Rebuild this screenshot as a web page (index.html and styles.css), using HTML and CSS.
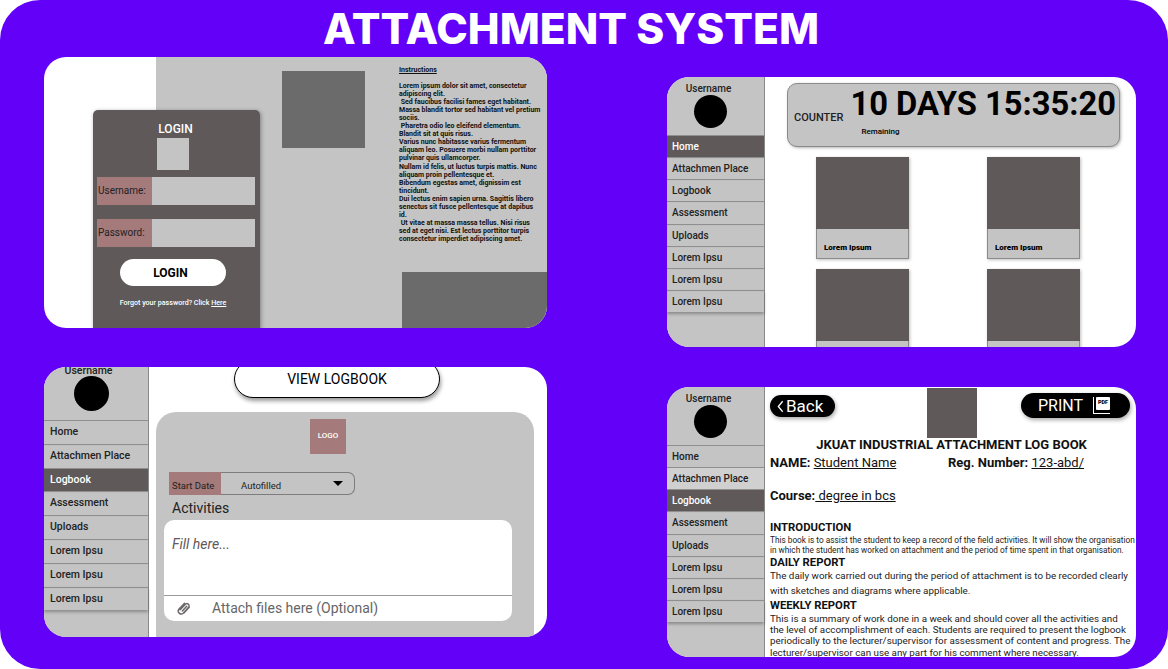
FILE: index.html
```html
<!DOCTYPE html>
<html lang="en">
<head>
  <meta charset="UTF-8">
  <title>Attachment System</title>
  <link rel="stylesheet" href="styles.css">
</head>
<body>
  <div class="stage">
    <h1 class="title">ATTACHMENT SYSTEM</h1>

    <div class="col col-left">
      <!-- login -->
      <section class="panel login-panel">
        <div class="login-blank"></div>
        <div class="login-gray">
          <div class="login-img"></div>
          <div class="instructions">
            <div class="instructions-head">Instructions</div>
            <p>Lorem ipsum dolor sit amet, consectetur adipiscing elit.<br>
            &nbsp;Sed faucibus facilisi fames eget habitant. Massa blandit tortor sed habitant vel pretium sociis.<br>
            &nbsp;Pharetra odio leo eleifend elementum. Blandit sit at quis risus.<br>
            Varius nunc habitasse varius fermentum aliquam leo. Posuere morbi nullam porttitor pulvinar quis ullamcorper.<br>
            Nullam id felis, ut luctus turpis mattis. Nunc aliquam proin pellentesque et.<br>
            Bibendum egestas amet, dignissim est tincidunt.<br>
            Dui lectus enim sapien urna. Sagittis libero senectus sit fusce pellentesque at dapibus id.<br>
            &nbsp;Ut vitae at massa massa tellus. Nisi risus sed at eget nisi. Est lectus porttitor turpis consectetur imperdiet adipiscing amet.</p>
          </div>
          <div class="login-corner"></div>
        </div>
        <div class="login-card">
          <div class="login-title">LOGIN</div>
          <div class="login-logo"></div>
          <div class="field"><span class="field-label">Username:</span><span class="field-input"></span></div>
          <div class="field"><span class="field-label">Password:</span><span class="field-input"></span></div>
          <button class="login-btn">LOGIN</button>
          <div class="forgot">Forgot your password? Click <u>Here</u></div>
        </div>
      </section>

      <!-- activity form -->
      <section class="panel app big">
        <aside class="side">
          <div class="side-head">
            <div class="side-name">Username</div>
            <div class="avatar"></div>
          </div>
          <a class="nav">Home</a>
          <a class="nav">Attachmen Place</a>
          <a class="nav active">Logbook</a>
          <a class="nav">Assessment</a>
          <a class="nav">Uploads</a>
          <a class="nav">Lorem Ipsu</a>
          <a class="nav">Lorem Ipsu</a>
          <a class="nav">Lorem Ipsu</a>
        </aside>
        <div class="form-main">
          <button class="view-btn">VIEW LOGBOOK</button>
          <div class="form-card">
            <div class="form-logo">LOGO</div>
            <div class="date-row">
              <span class="date-label">Start Date</span>
              <span class="date-value">Autofilled</span>
              <span class="caret"></span>
            </div>
            <div class="activities">Activities</div>
            <div class="fill-box">
              <div class="fill-text">Fill here...</div>
              <div class="attach">
                <svg class="clip" viewBox="0 0 24 24" width="15" height="15"><path d="M5 14l8-8.500a3.500 3.500 0 0 1 5.500 4.500L10 19.500a4.800 4.800 0 0 1-7-6.500l9-9.500M8.500 16l7-7.500M11 19l8.500-9" fill="none" stroke="#6e6a6a" stroke-width="2.400" stroke-linecap="round"/></svg>
                <span>Attach files here (Optional)</span>
              </div>
            </div>
          </div>
        </div>
      </section>
    </div>

    <div class="col col-right">
      <!-- dashboard -->
      <section class="panel app">
        <aside class="side">
          <div class="side-head">
            <div class="side-name">Username</div>
            <div class="avatar"></div>
          </div>
          <a class="nav active">Home</a>
          <a class="nav">Attachmen Place</a>
          <a class="nav">Logbook</a>
          <a class="nav">Assessment</a>
          <a class="nav">Uploads</a>
          <a class="nav">Lorem Ipsu</a>
          <a class="nav">Lorem Ipsu</a>
          <a class="nav">Lorem Ipsu</a>
        </aside>
        <div class="dash-main">
          <div class="counter">
            <span class="counter-label">COUNTER</span>
            <div class="counter-right">
              <div class="counter-time">10 DAYS 15:35:20</div>
              <div class="counter-sub">Remaining</div>
            </div>
          </div>
          <div class="tiles">
            <div class="tile"><div class="tile-img"></div><div class="tile-text">Lorem Ipsum</div></div>
            <div class="tile"><div class="tile-img"></div><div class="tile-text">Lorem Ipsum</div></div>
            <div class="tile"><div class="tile-img"></div><div class="tile-text">Lorem Ipsum</div></div>
            <div class="tile"><div class="tile-img"></div><div class="tile-text">Lorem Ipsum</div></div>
          </div>
        </div>
      </section>

      <!-- logbook print -->
      <section class="panel app">
        <aside class="side">
          <div class="side-head">
            <div class="side-name">Username</div>
            <div class="avatar"></div>
          </div>
          <a class="nav">Home</a>
          <a class="nav light">Attachmen Place</a>
          <a class="nav active">Logbook</a>
          <a class="nav">Assessment</a>
          <a class="nav">Uploads</a>
          <a class="nav">Lorem Ipsu</a>
          <a class="nav">Lorem Ipsu</a>
          <a class="nav">Lorem Ipsu</a>
        </aside>
        <div class="book-main">
          <div class="book-top">
            <button class="back-btn">
              <svg viewBox="0 0 8 14" width="7" height="13"><path d="M6.500 1L1.500 7l5 6" fill="none" stroke="#fff" stroke-width="1.500"/></svg>
              Back
            </button>
            <div class="book-logo"></div>
            <button class="print-btn">
              PRINT
              <span class="pdf-icon"><span class="pdf-tag">PDF</span></span>
            </button>
          </div>
          <h2 class="book-title">JKUAT INDUSTRIAL ATTACHMENT LOG BOOK</h2>
          <div class="book-row">
            <span class="book-name"><b>NAME:</b> <u>Student Name</u></span>
            <span><b>Reg. Number:</b> <u>123-abd/</u></span>
          </div>
          <div class="book-row book-course"><span><b>Course:</b><u> degree in bcs</u></span></div>
          <h3 class="book-head intro">INTRODUCTION</h3>
          <p class="book-small">This book is to assist the student to keep a record of the field activities. It will show the organisation in which the student has worked on attachment and the period of time spent in that organisation.</p>
          <h3 class="book-head">DAILY REPORT</h3>
          <p class="book-wide">The daily work carried out during the period of attachment is to be recorded clearly with sketches and diagrams where applicable.</p>
          <h3 class="book-head">WEEKLY REPORT</h3>
          <p class="book-text">This is a summary of work done in a week and should cover all the activities and the level of accomplishment of each. Students are required to present the logbook periodically to the lecturer/supervisor for assessment of content and progress. The lecturer/supervisor can use any part for his comment where necessary.</p>
        </div>
      </section>
    </div>
  </div>
</body>
</html>
```

FILE: styles.css
```css
* {
  box-sizing: border-box;
}
body {
  margin: 0;
  background: #fff;
  font-family: Roboto, "Liberation Sans", sans-serif;
  color: #000;
}
button {
  font-family: inherit;
  cursor: pointer;
}
p, h1, h2, h3 {
  margin: 0;
}
.stage {
  width: 1168px;
  height: 669px;
  background: #6200f8;
  border-radius: 40px;
  overflow: hidden;
  position: relative;
  display: flex;
  padding-left: 44px;
}
.title {
  position: absolute;
  left: 0;
  right: 26px;
  top: 3px;
  text-align: center;
  color: #fff;
  font-family: Inter, "Open Sans", sans-serif;
  font-size: 42.500px;
  line-height: 52px;
  font-weight: 800;
}
.col {
  display: flex;
  flex-direction: column;
  gap: 39px;
}
.col-left {
  width: 503px;
  padding-top: 57px;
}
.col-right {
  width: 469px;
  margin-left: 120px;
  padding-top: 77px;
  gap: 40px;
}
.panel {
  height: 270px;
  background: #fff;
  border-radius: 22px;
  overflow: hidden;
  position: relative;
  flex: none;
}

/* login */
.login-panel {
  height: 271px;
  display: flex;
}
.login-blank {
  width: 112px;
}
.login-gray {
  flex: 1;
  background: #c4c4c4;
  padding: 14px 0 0 126px;
  display: flex;
  gap: 34px;
  position: relative;
}
.login-img {
  width: 83px;
  height: 77px;
  background: #6b6b6b;
}
.instructions {
  width: 142px;
  margin-top: -5px;
  font-size: 7px;
  line-height: 8.050px;
  font-weight: 700;
  color: #111;
}
.instructions-head {
  text-decoration: underline;
  margin-bottom: 8px;
}
.login-corner {
  position: absolute;
  right: 0;
  bottom: 0;
  width: 145px;
  height: 56px;
  background: #6b6b6b;
}
.login-card {
  position: absolute;
  left: 49px;
  top: 53px;
  width: 167px;
  height: 240px;
  background: #5f5959;
  border-radius: 5px;
  box-shadow: 1px 1px 4px rgba(0,0,0,0.35);
  padding-top: 12px;
  display: flex;
  flex-direction: column;
  align-items: center;
}
.login-title {
  color: #fff;
  font-size: 12px;
  font-weight: 500;
  line-height: 15px;
  margin-left: -2px;
}
.login-logo {
  width: 32px;
  height: 32px;
  background: #c4c4c4;
  margin: 1px 0 7px -7px;
}
.field {
  width: 158px;
  height: 28px;
  display: flex;
  margin: 0 0 14px -1px;
}
.field-label {
  width: 55px;
  background: #a47a7a;
  color: #222;
  font-size: 10px;
  line-height: 27px;
  padding-left: 1px;
}
.field-input {
  flex: 1;
  background: #c4c4c4;
}
.login-btn {
  width: 106px;
  height: 27px;
  border: 0;
  border-radius: 14px;
  background: #fff;
  font-size: 12px;
  font-weight: 700;
  margin: -2px 0 9px -7px;
  padding: 0 5px 0 0;
}
.forgot {
  color: #fff;
  font-size: 7.100px;
  font-weight: 500;
  line-height: 16px;
  margin-left: -7px;
}

/* sidebar */
.app {
  display: flex;
}
.side {
  width: 98px;
  flex: none;
  background: #c4c4c4;
  border-right: 1px solid #8a8a8a;
}
.side-head {
  height: 58px;
  padding-top: 5px;
  display: flex;
  flex-direction: column;
  align-items: center;
}
.side-name {
  font-size: 10px;
  font-weight: 500;
  line-height: 13px;
  color: #222;
  margin-left: -14px;
}
.avatar {
  width: 33px;
  height: 33px;
  border-radius: 50%;
  background: #000;
  margin-left: -10px;
}
.nav {
  display: block;
  height: 22.150px;
  line-height: 21px;
  padding-left: 5px;
  font-size: 10px;
  font-weight: 500;
  color: #222;
  border-top: 1px solid #8f8f8f;
  box-shadow: 0 1px 1px rgba(0,0,0,0.12);
}
.nav:last-child {
  box-shadow: 0 2px 3px rgba(0,0,0,0.3);
}
.nav.active {
  background: #5f5959;
  color: #fff;
}
.nav.light {
  background: #d0d0d0;
}

.big .side {
  width: 105px;
}
.big .side-head {
  height: 55px;
  padding-top: 0;
  margin-top: -2px;
}
.big .side-name {
  font-size: 10.500px;
  line-height: 11px;
  margin-left: -15px;
}
.big .avatar {
  width: 35px;
  height: 35px;
  margin-left: -9px;
}
.big .nav {
  height: 23.800px;
  line-height: 21px;
  padding-left: 6px;
  font-size: 10.500px;
}

/* dashboard */
.dash-main {
  flex: 1;
  padding: 6px 16px 0 22px;
}
.counter {
  height: 64px;
  background: #c4c4c4;
  border: 1px solid #8a8a8a;
  border-radius: 10px;
  box-shadow: 1px 1px 3px rgba(0,0,0,0.3);
  display: flex;
  padding-left: 6px;
}
.counter-label {
  font-size: 11px;
  font-weight: 500;
  margin-top: 27px;
  color: #222;
}
.counter-right {
  margin-left: 7px;
}
.counter-time {
  font-size: 32.700px;
  font-weight: 700;
  line-height: 40px;
  white-space: nowrap;
}
.counter-sub {
  font-size: 8px;
  font-weight: 500;
  margin: 3px 0 0 11px;
}
.tiles {
  display: grid;
  grid-template-columns: 93px 93px;
  column-gap: 78px;
  row-gap: 10px;
  margin: 10px 0 0 29px;
}
.tile {
  height: 102px;
  background: #c4c4c4;
  border: 1px solid #8a8a8a;
  border-top: 0;
  box-shadow: 1px 1px 3px rgba(0,0,0,0.25);
}
.tile-img {
  height: 72px;
  margin: 0 -1px;
  background: #5f5959;
}
.tile-text {
  font-size: 8px;
  font-weight: 900;
  padding: 14px 0 0 7px;
  line-height: 10px;
}

/* activity form */
.form-main {
  flex: 1;
  padding: 0 13px 0 7px;
  display: flex;
  flex-direction: column;
}
.view-btn {
  width: 206px;
  height: 38px;
  margin: -7px 0 0 78px;
  flex: none;
  background: #fff;
  border: 1px solid #000;
  border-radius: 19px;
  box-shadow: 1px 3px 4px rgba(0,0,0,0.4);
  font-size: 14px;
  padding-top: 1px;
}
.form-card {
  margin-top: 14px;
  flex: 1;
  background: #c4c4c4;
  border-radius: 20px 20px 0 0;
  padding: 7px 0 0 8px;
}
.form-logo {
  width: 36px;
  height: 35px;
  margin-left: 146px;
  background: #a47a7a;
  color: #fff;
  font-size: 8px;
  font-weight: 500;
  line-height: 33px;
  text-align: center;
}
.date-row {
  width: 186px;
  height: 23px;
  margin: 18px 0 0 5px;
  display: flex;
  align-items: center;
  border: 1px solid #7d7d7d;
  border-left: 0;
  border-radius: 0 7px 7px 0;
  font-size: 9.500px;
  color: #222;
  position: relative;
}
.date-label {
  width: 52px;
  height: 23px;
  background: #a47a7a;
  line-height: 27px;
  padding-left: 3px;
  flex: none;
}
.date-value {
  margin: 4px 0 0 20px;
}
.caret {
  position: absolute;
  right: 11px;
  top: 8px;
  border: 5px solid transparent;
  border-top: 5px solid #000;
  border-bottom: 0;
}
.activities {
  font-size: 14px;
  line-height: 20px;
  margin: 3px 0 2px 8px;
  color: #222;
}
.fill-box {
  width: 348px;
  height: 101px;
  background: #fff;
  border-radius: 10px;
  display: flex;
  flex-direction: column;
}
.fill-text {
  height: 76px;
  border-bottom: 1px solid #9a9a9a;
  padding: 15px 0 0 8px;
  font-size: 14px;
  font-style: italic;
  line-height: 18px;
  color: #5f5959;
}
.attach {
  display: flex;
  align-items: center;
  padding-left: 13px;
  height: 24px;
  font-size: 14px;
  color: #666;
}
.attach span {
  margin-left: 20px;
}

/* logbook */
.book-main {
  flex: 1;
  padding: 0 5px;
  min-width: 0;
}
.book-top {
  height: 51px;
  display: flex;
  justify-content: space-between;
  align-items: flex-start;
  color: #fff;
}
.back-btn {
  width: 65px;
  height: 22px;
  margin-top: 8px;
  background: #000;
  color: #fff;
  border: 0;
  border-radius: 11px;
  box-shadow: 1px 2px 4px rgba(0,0,0,0.35);
  font-size: 17px;
  display: flex;
  align-items: center;
  gap: 2px;
  padding: 0 0 0 7px;
}
.book-logo {
  width: 50px;
  height: 50px;
  margin: 1px 0 0 47px;
  background: #5f5959;
}
.print-btn {
  width: 109px;
  height: 25px;
  margin: 6px 1px 0 0;
  background: #000;
  color: #fff;
  border: 0;
  border-radius: 13px;
  box-shadow: 1px 2px 4px rgba(0,0,0,0.35);
  font-size: 16px;
  display: flex;
  align-items: center;
  gap: 10px;
  padding: 0 0 0 17px;
}
.pdf-icon {
  width: 17px;
  height: 17px;
  border-left: 1.500px solid #fff;
  border-bottom: 1.500px solid #fff;
  position: relative;
}
.pdf-tag {
  position: absolute;
  left: 2px;
  top: 0;
  width: 14px;
  height: 13px;
  background: #fff;
  border-radius: 1px;
  color: #000;
  font-size: 5.500px;
  font-weight: 900;
  line-height: 11px;
  text-align: center;
}
.book-title {
  font-size: 13px;
  line-height: 14px;
  font-weight: 700;
  text-align: center;
  color: #111;
  margin-left: 2px;
  white-space: nowrap;
}
.book-row {
  display: flex;
  font-size: 13px;
  line-height: 18px;
  margin-top: 2px;
  color: #111;
}
.book-row b {
  font-weight: 700;
}
.book-name {
  width: 178px;
}
.book-course {
  margin-top: 15px;
}
.book-head {
  font-size: 11.300px;
  line-height: 14px;
  font-weight: 700;
  color: #111;
}
.intro {
  margin-top: 16px;
}
.book-small {
  font-size: 8.250px;
  line-height: 9.500px;
  color: #222;
  margin: 1px -4px 1px 0;
}
.book-wide {
  font-size: 9.800px;
  line-height: 15.300px;
  color: #222;
  margin: -2px 0 0;
}
.book-text {
  font-size: 9.800px;
  line-height: 11.400px;
  color: #222;
}
```
